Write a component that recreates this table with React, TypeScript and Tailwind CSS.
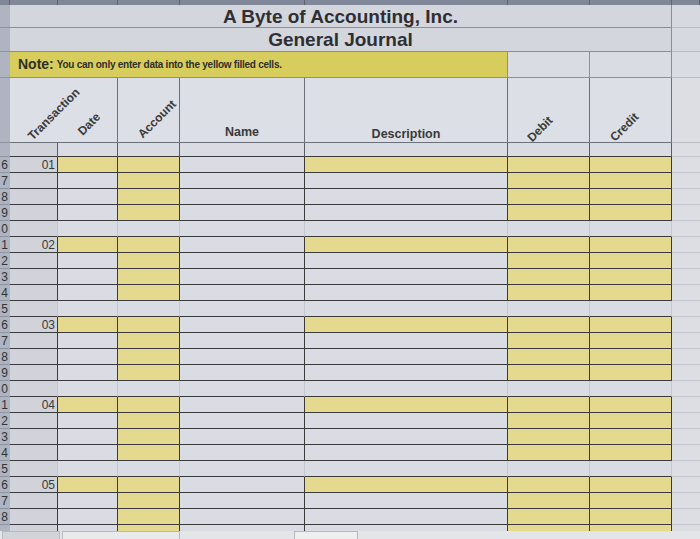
import React from "react";

// column widths: row header, A..G, H (partial)
const COLS = [10, 48, 60, 62, 125, 203, 82, 82, 28];

const SHEET = "bg-[#d9dce3]";
const YELLOW = "bg-[#e5d98f]";
const COL_A = "bg-[#d0d3d9]";
const LAST_VISIBLE_ROW = 28;

type Cell = { bg: string; dark: boolean };

// only the last digit of the row number shows at the left edge of the photo
function RowHeader({ n, height }: { n?: number; height: string }) {
  return (
    <div className={`${height} w-[10px] shrink-0 overflow-hidden border-b border-[#8d93a0] bg-[#aeb4c0]`}>
      {n !== undefined && n <= LAST_VISIBLE_ROW && (
        <div className="flex h-full w-[10px] items-center justify-end pr-[2px] text-[12px] leading-none text-[#333]">{n % 10}</div>
      )}
    </div>
  );
}

function DataRow({ rowNo, kind, label }: { rowNo: number; kind: "first" | "body" | "gap"; label?: string }) {
  const cells: Cell[] =
    kind === "first"
      ? [
          { bg: COL_A, dark: true },
          { bg: YELLOW, dark: true },
          { bg: YELLOW, dark: true },
          { bg: SHEET, dark: true },
          { bg: YELLOW, dark: true },
          { bg: YELLOW, dark: true },
          { bg: YELLOW, dark: true },
        ]
      : kind === "body"
        ? [
            { bg: COL_A, dark: true },
            { bg: SHEET, dark: true },
            { bg: YELLOW, dark: true },
            { bg: SHEET, dark: true },
            { bg: SHEET, dark: true },
            { bg: YELLOW, dark: true },
            { bg: YELLOW, dark: true },
          ]
        : [
            { bg: COL_A, dark: false },
            { bg: SHEET, dark: false },
            { bg: SHEET, dark: false },
            { bg: SHEET, dark: false },
            { bg: SHEET, dark: false },
            { bg: SHEET, dark: false },
            { bg: SHEET, dark: false },
          ];

  return (
    <div className="flex h-[16px] shrink-0">
      <RowHeader n={rowNo} height="h-[16px]" />
      {cells.map((c, i) => (
        <div
          key={i}
          style={{ width: COLS[i + 1] }}
          className={`shrink-0 border-b border-r border-b-[#3b3b3b] ${c.dark ? "border-r-[#3b3b3b]" : "border-r-[#c3c7cf]"} ${c.bg}`}
        >
          {i === 0 && label && (
            <div className="flex h-full items-center justify-end pr-[2px] text-[12px] leading-none text-[#3a3a3a]">{label}</div>
          )}
        </div>
      ))}
      <div className="w-[28px] shrink-0 border-b border-[#c3c7cf] bg-[#dcdee3]" />
    </div>
  );
}

function Diagonal({ text, cls }: { text: string; cls: string }) {
  return <span className={`inline-block -rotate-45 whitespace-nowrap text-[12px] font-bold leading-[14px] text-[#3a3a3a] ${cls}`}>{text}</span>;
}

export default function App() {
  const groups = ["01", "02", "03", "04", "05"];
  const rows: { rowNo: number; kind: "first" | "body" | "gap"; label?: string }[] = [];
  let r = 6;
  for (const g of groups) {
    rows.push({ rowNo: r++, kind: "first", label: g });
    rows.push({ rowNo: r++, kind: "body" });
    rows.push({ rowNo: r++, kind: "body" });
    rows.push({ rowNo: r++, kind: "body" });
    rows.push({ rowNo: r++, kind: "gap" });
  }

  return (
    <div className="flex h-[539px] w-[700px] flex-col overflow-hidden bg-[#d9dce3] font-['Liberation_Sans',Arial,sans-serif]">
      <div className="flex h-[531px] flex-col overflow-hidden">
        {/* column header strip */}
        <div className="flex h-[5px] shrink-0 bg-[#7f8798]">
          {COLS.map((w, i) => (
            <div key={i} style={{ width: w }} className="shrink-0 border-r border-[#5d6474]" />
          ))}
        </div>

        {/* title rows */}
        <div className="flex h-[23px] shrink-0">
          <RowHeader height="h-[23px]" />
          <div className="flex w-[662px] shrink-0 items-center justify-center border-b border-r border-[#8a8f99] bg-[#d3d6dd] text-[19px] font-bold leading-none text-[#2f2f33]">
            A Byte of Accounting, Inc.
          </div>
          <div className="w-[28px] shrink-0 border-b border-[#b9bdc6] bg-[#d6d9df]" />
        </div>
        <div className="flex h-[24px] shrink-0">
          <RowHeader height="h-[24px]" />
          <div className="flex w-[662px] shrink-0 items-center justify-center border-b border-r border-[#8a8f99] bg-[#d3d6dd] text-[19px] font-bold leading-none text-[#2f2f33]">
            General Journal
          </div>
          <div className="w-[28px] shrink-0 border-b border-[#b9bdc6] bg-[#d6d9df]" />
        </div>

        {/* note row */}
        <div className="flex h-[26px] shrink-0">
          <RowHeader height="h-[26px]" />
          <div className="flex w-[498px] shrink-0 items-center border-b border-r border-[#8a8f99] bg-[#d7cd5c] pl-[8px] text-[#2f2f2a]">
            <span className="text-[14px] font-bold">Note:</span>
            <span className="ml-[3px] text-[10px] font-bold tracking-[-0.25px]">You can only enter data into the yellow filled cells.</span>
          </div>
          <div className="w-[82px] shrink-0 border-b border-r border-[#8a8f99] bg-[#d9dce3]" />
          <div className="w-[82px] shrink-0 border-b border-r border-[#8a8f99] bg-[#d9dce3]" />
          <div className="w-[28px] shrink-0 border-b border-[#b9bdc6] bg-[#d9dce3]" />
        </div>

        {/* header row with rotated labels */}
        <div className="flex h-[65px] shrink-0">
          <RowHeader height="h-[65px]" />
          <div className="flex w-[48px] shrink-0 items-end overflow-visible border-b border-[#6b707a] bg-[#dcdfe5] pb-[21px]">
            <Diagonal text="Transaction" cls="relative z-10 ml-[10px]" />
          </div>
          <div className="flex w-[60px] shrink-0 items-end justify-center border-b border-r border-[#6b707a] bg-[#dcdfe5] pb-[11px] pl-[4px]">
            <Diagonal text="Date" cls="" />
          </div>
          <div className="flex w-[62px] shrink-0 items-end justify-center border-b border-r border-[#6b707a] bg-[#dcdfe5] pb-[16px] pl-[16px]">
            <Diagonal text="Account" cls="" />
          </div>
          <div className="flex w-[125px] shrink-0 items-end justify-center border-b border-r border-[#6b707a] bg-[#dcdfe5] pb-[4px]">
            <span className="text-[12.5px] font-bold leading-none text-[#3a3a3a]">Name</span>
          </div>
          <div className="flex w-[203px] shrink-0 items-end justify-center border-b border-r border-[#6b707a] bg-[#dcdfe5] pb-[2px]">
            <span className="text-[12.5px] font-bold leading-none text-[#3a3a3a]">Description</span>
          </div>
          <div className="flex w-[82px] shrink-0 items-end justify-center border-b border-r border-[#6b707a] bg-[#dcdfe5] pb-[6px] pr-[18px]">
            <Diagonal text="Debit" cls="" />
          </div>
          <div className="flex w-[82px] shrink-0 items-end justify-center border-b border-r border-[#6b707a] bg-[#dcdfe5] pb-[8px] pr-[12px]">
            <Diagonal text="Credit" cls="" />
          </div>
          <div className="w-[28px] shrink-0 border-b border-[#b9bdc6] bg-[#dcdee3]" />
        </div>

        {/* blank row 5 */}
        <div className="flex h-[14px] shrink-0">
          <RowHeader height="h-[14px]" />
          {COLS.slice(1, 8).map((w, i) => (
            <div key={i} style={{ width: w }} className={`shrink-0 border-b border-r border-b-[#3b3b3b] border-r-[#5a5e66] ${i === 0 ? COL_A : SHEET}`} />
          ))}
          <div className="w-[28px] shrink-0 border-b border-[#c3c7cf] bg-[#dcdee3]" />
        </div>

        {rows.map((row) => (
          <DataRow key={row.rowNo} rowNo={row.rowNo} kind={row.kind} label={row.label} />
        ))}
      </div>

      {/* sheet tab bar */}
      <div className="flex h-[8px] shrink-0 items-start gap-[2px] bg-[#e4e5e8] pl-[2px]">
        <div className="h-[8px] w-[58px] border-l border-r border-t border-[#b6b9c0] bg-[#d2d4d9]" />
        <div className="h-[8px] w-[118px] border-l border-r border-t border-[#b6b9c0] bg-[#e9eaec]" />
        <div className="ml-[112px] h-[8px] w-[64px] border-l border-r border-t border-[#b6b9c0] bg-[#eceef0]" />
      </div>
    </div>
  );
}
